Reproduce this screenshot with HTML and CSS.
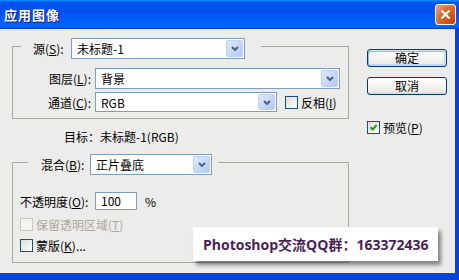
FILE: index.html
```html
<!DOCTYPE html>
<html lang="zh-CN">
<head>
  <meta charset="UTF-8" />
  <title>应用图像</title>
  <link rel="stylesheet" href="styles.css">
</head>
<body>
  <div class="window">
    <div class="titlebar">
      <span class="title">应用图像</span>
      <span class="close">
        <svg width="11" height="11" viewBox="0 0 11 11"><path d="M1.5 1.5l8 8M9.5 1.5l-8 8" stroke="#fff" stroke-width="2.2" fill="none"/></svg>
      </span>
    </div>
    <div class="frame">
      <div class="left">
        <fieldset class="group group-source">
          <legend class="group-head">
            <span class="head-label">源(<u>S</u>):</span>
            <div class="combo combo-source">
              <span class="combo-text">未标题-1</span>
              <span class="combo-btn"><svg width="8" height="5" viewBox="0 0 8 5"><path d="M1 1l3 3 3-3" stroke="#4d6185" stroke-width="2" fill="none"/></svg></span>
            </div>
          </legend>
          <div class="row">
            <span class="row-label">图层(<u>L</u>):</span>
            <div class="combo combo-layer">
              <span class="combo-text">背景</span>
              <span class="combo-btn"><svg width="8" height="5" viewBox="0 0 8 5"><path d="M1 1l3 3 3-3" stroke="#4d6185" stroke-width="2" fill="none"/></svg></span>
            </div>
          </div>
          <div class="row row-channel">
            <span class="row-label">通道(<u>C</u>):</span>
            <div class="combo combo-channel">
              <span class="combo-text">RGB</span>
              <span class="combo-btn"><svg width="8" height="5" viewBox="0 0 8 5"><path d="M1 1l3 3 3-3" stroke="#4d6185" stroke-width="2" fill="none"/></svg></span>
            </div>
            <label class="check check-invert"><span class="box"></span>反相(<u>I</u>)</label>
          </div>
        </fieldset>

        <div class="target">目标：未标题-1(RGB)</div>

        <fieldset class="group group-blend">
          <legend class="group-head">
            <span class="head-label">混合(<u>B</u>):</span>
            <div class="combo combo-blend">
              <span class="combo-text">正片叠底</span>
              <span class="combo-btn"><svg width="8" height="5" viewBox="0 0 8 5"><path d="M1 1l3 3 3-3" stroke="#4d6185" stroke-width="2" fill="none"/></svg></span>
            </div>
          </legend>
          <div class="opacity">
            <span class="opacity-label">不透明度(<u>O</u>):</span>
            <span class="field">100</span>
            <span class="unit">%</span>
          </div>
          <label class="check disabled"><span class="box"></span>保留透明区域(<u>T</u>)</label>
          <label class="check"><span class="box"></span>蒙版(<u>K</u>)...</label>
        </fieldset>
      </div>

      <div class="right">
        <button class="btn btn-default">确定</button>
        <button class="btn">取消</button>
        <label class="check check-preview">
          <span class="box"><svg width="11" height="11" viewBox="0 0 11 11"><path d="M2.5 5.2l2.2 2.3 4-4.5" stroke="#21a121" stroke-width="2.2" fill="none"/></svg></span>预览(<u>P</u>)
        </label>
      </div>
    </div>

    <div class="watermark">Photoshop交流QQ群：163372436</div>
  </div>
</body>
</html>
```

FILE: styles.css
```css
body {
  margin: 0;
  font-family: "Noto Sans CJK SC", sans-serif;
  font-size: 12px;
  color: #000;
}
.window {
  position: relative;
  width: 459px;
  height: 280px;
  display: flex;
  flex-direction: column;
  background: #ececea;
  overflow: hidden;
}
.titlebar {
  height: 29px;
  flex: none;
  display: flex;
  align-items: center;
  justify-content: space-between;
  padding: 0 3px 0 4px;
  background: linear-gradient(180deg, #0997ff, #0053ee 8%, #0050ee 40%, #0066ff 88%, #0066ff 93%, #005bff 95%, #003dd7 96%, #003dd7);
}
.title {
  color: #fff;
  font-weight: bold;
  font-size: 13px;
  letter-spacing: 1px;
  text-shadow: 1px 1px #0f1089;
}
.close {
  width: 21px;
  height: 21px;
  box-sizing: border-box;
  border: 1px solid #fff;
  border-radius: 3px;
  background: radial-gradient(circle at 90% 90%, #cc4600, #dc6527 55%, #f0a58a);
  display: flex;
  align-items: center;
  justify-content: center;
}
.frame {
  flex: 1;
  display: flex;
  border-right: 4px solid #0842da;
  border-bottom: 7px solid #0842da;
}
.left {
  width: 349px;
  padding-top: 5px;
}
.right {
  margin-left: 18px;
  padding-top: 20px;
  display: flex;
  flex-direction: column;
  align-items: flex-start;
}

/* group boxes */
.group {
  margin: 0 0 0 12px;
  width: 337px;
  min-width: 0;
  box-sizing: border-box;
  border: 1px solid #a9a89a;
}
.group-head {
  display: flex;
  align-items: center;
  margin-left: 8px;
}
.head-label {
  flex: none;
}
.group-source {
  padding: 9px 0 6px 0;
}
.group-source .group-head {
  padding: 4px 16px 0 12px;
}
.group-source .head-label {
  width: 38px;
}
.group-blend {
  margin-top: 5px;
  padding: 17px 0 10px 7px;
}
.group-blend .group-head {
  padding: 4px 6px 0 13px;
}
.group-blend .head-label {
  width: 49px;
}

/* combo boxes */
.combo {
  display: flex;
  align-items: center;
  box-sizing: border-box;
  height: 21px;
  border: 1px solid #7f9db9;
  background: #fff;
  padding-left: 5px;
}
.combo-text {
  flex: 1;
  white-space: nowrap;
}
.combo-btn {
  width: 17px;
  height: 17px;
  margin-right: 1px;
  box-sizing: border-box;
  border: 1px solid #bdd0fb;
  border-radius: 2px;
  background: linear-gradient(135deg, #dfe9fe, #b4c8f7);
  display: flex;
  align-items: center;
  justify-content: center;
}
.combo-source { width: 174px; }
.combo-layer { width: 245px; }
.combo-channel { width: 182px; height: 20px; }
.combo-channel .combo-btn { height: 16px; }
.combo-blend { width: 122px; }

.row {
  display: flex;
  align-items: center;
  height: 21px;
}
.row-channel {
  margin-top: 3px;
  height: 20px;
}
.row-label {
  width: 78px;
  text-align: right;
  margin-right: 4px;
  flex: none;
}

.target {
  height: 16px;
  line-height: 16px;
  margin: 10px 0 0 64px;
}

/* opacity */
.opacity {
  display: flex;
  align-items: center;
  height: 18px;
}
.opacity-label {
  width: 75px;
  flex: none;
}
.field {
  width: 42px;
  height: 18px;
  box-sizing: border-box;
  border: 1px solid #7f9db9;
  background: #fff;
  padding-left: 5px;
  line-height: 16px;
}
.unit {
  margin-left: 8px;
}

/* checkboxes */
.check {
  display: flex;
  align-items: center;
  height: 13px;
  line-height: 13px;
  white-space: nowrap;
}
.group-blend .check {
  margin-top: 8px;
}
.box {
  width: 13px;
  height: 13px;
  box-sizing: border-box;
  border: 1px solid #1c5180;
  background: linear-gradient(135deg, #dcdcd7, #fff);
  margin-right: 3px;
  flex: none;
  display: flex;
  align-items: center;
  justify-content: center;
}
.check-invert {
  margin-left: 8px;
}
.check.disabled {
  color: #aca899;
}
.check.disabled .box {
  border-color: #cac8bb;
  background: #f4f3ee;
}
.check-preview {
  margin-top: 16px;
}

/* buttons */
.btn {
  width: 80px;
  height: 18px;
  padding: 0;
  margin: 0 0 10px 0;
  font-family: "Noto Sans CJK SC", sans-serif;
  font-size: 12px;
  line-height: 14px;
  color: #000;
  border: 1px solid #003c74;
  border-radius: 3px;
  background: linear-gradient(180deg, #fff, #ecebe6 86%, #d6d0c5);
}
.btn-default {
  box-shadow: inset -1px 1px #cee7ff, inset 1px 2px #98b8ea, inset -2px -2px #bcd4f6, inset 1px -1px #89ade4;
}

.watermark {
  position: absolute;
  left: 193px;
  top: 227px;
  width: 245px;
  height: 34px;
  box-sizing: border-box;
  padding-left: 10px;
  display: flex;
  align-items: center;
  background: #fff;
  box-shadow: 3px 4px 4px rgba(0, 0, 0, 0.45);
  font-family: "Open Sans", "Noto Sans CJK SC", sans-serif;
  font-weight: bold;
  font-size: 14px;
  color: #4a1f55;
  white-space: nowrap;
}
```
